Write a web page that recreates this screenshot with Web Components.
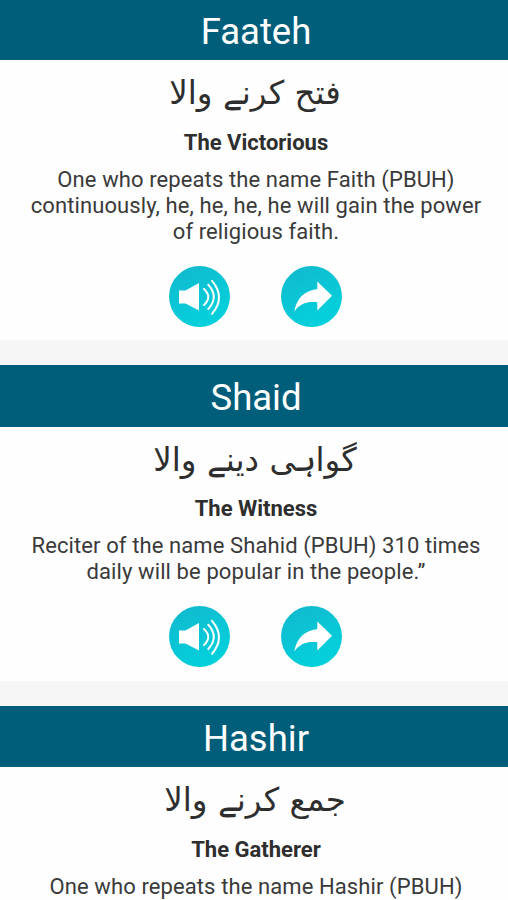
<!DOCTYPE html>
<html lang="en">
<head>
<meta charset="utf-8">
<title>Names</title>
<style>
  body {
    margin: 0;
    height: 900px;
    overflow: hidden;
    background: #f6f6f6;
    font-family: Roboto, "Liberation Sans", sans-serif;
    color: #2e2e2e;
  }
</style>
</head>
<body>
<name-list>
  <name-card name="Faateh" urdu="فتح کرنے والا" meaning="The Victorious">One who repeats the name Faith (PBUH)<br>continuously, he, he, he, he will gain the power<br>of religious faith.</name-card>
  <name-card name="Shaid" urdu="گواہی دینے والا" meaning="The Witness">Reciter of the name Shahid (PBUH) 310 times<br>daily will be popular in the people.”</name-card>
  <name-card name="Hashir" urdu="جمع کرنے والا" meaning="The Gatherer" compact>One who repeats the name Hashir (PBUH)</name-card>
</name-list>

<script>
const icons = {
  sound: `
    <path fill="#fff" d="M10 24.500h6.500L30 17v27.500l-13.500-7H10z"/>
    <g fill="none" stroke="#fff" stroke-width="2" stroke-linecap="round">
      <path d="M35 23q8.500 8 0 16"/>
      <path d="M39.300 18.800q11 12 0 24.200"/>
      <path d="M43 14.800q14 16.400 0 33"/>
    </g>`,
  share: `
    <path fill="#fff" d="M36.300 15.500 51 29.800 36.300 44.500v-8.300c-10-1-17 1-23 9.200C15.500 33 23 24.500 36.300 23z"/>`
};

class NameList extends HTMLElement {
  constructor() {
    super();
    const shadow = this.attachShadow({ mode: 'open' });
    shadow.innerHTML = /*html*/ `
      <style>
        :host {
          display: flex;
          flex-direction: column;
          gap: 25px;
          margin-top: -1.5px;
        }
      </style>
      <slot></slot>
    `;
  }
}

class RoundButton extends HTMLElement {
  constructor() {
    super();
    const shadow = this.attachShadow({ mode: 'open' });
    shadow.innerHTML = /*html*/ `
      <style>
        :host {
          display: block;
          width: 61px;
          height: 61px;
        }
        svg {
          display: block;
        }
      </style>
      <svg width="61" height="61" viewBox="0 0 61 61">
        <defs>
          <linearGradient id="fill" x1="0" y1="0" x2=".5" y2="1">
            <stop offset="0" stop-color="#12b8cc"/>
            <stop offset="1" stop-color="#04d0dc"/>
          </linearGradient>
        </defs>
        <circle cx="30.5" cy="30.5" r="30.5" fill="url(#fill)"/>
        ${icons[this.getAttribute('icon')]}
      </svg>
    `;
  }
}

class NameCard extends HTMLElement {
  constructor() {
    super();
    const shadow = this.attachShadow({ mode: 'open' });
    const name = this.getAttribute('name');
    const urdu = this.getAttribute('urdu');
    const meaning = this.getAttribute('meaning');
    // compact cards have no buttons
    const actions = this.hasAttribute('compact') ? '' : `
      <div class="actions">
        <round-button icon="sound"></round-button>
        <round-button icon="share"></round-button>
      </div>`;

    shadow.innerHTML = /*html*/ `
      <style>
        :host {
          display: block;
          flex: none;
          background: #fefefe;
          text-align: center;
        }
        h2, h3, p {
          margin: 0;
          padding-left: 4px;
        }
        h2 {
          height: 61.5px;
          box-sizing: border-box;
          padding-top: 2px;
          background: #005e7a;
          color: #fff;
          font-size: 36.5px;
          font-weight: 400;
          line-height: 61px;
        }
        .urdu {
          height: 63.5px;
          padding-left: 2px;
          font-family: "DejaVu Sans", sans-serif;
          font-size: 32.5px;
          line-height: 66px;
        }
        h3 {
          font-size: 22px;
          font-weight: 700;
          line-height: 38px;
        }
        .text {
          padding-top: 5px;
          color: #3a3a3a;
          font-size: 22px;
          line-height: 26px;
          letter-spacing: .1px;
          white-space: nowrap;
        }
        .actions {
          display: flex;
          justify-content: center;
          gap: 51px;
          padding: 21px 0 13.5px 3px;
        }
      </style>
      <h2>${name}</h2>
      <p class="urdu" lang="ur" dir="rtl">${urdu}</p>
      <h3>${meaning}</h3>
      <p class="text"><slot></slot></p>
      ${actions}
    `;
  }
}

customElements.define('name-list', NameList);
customElements.define('round-button', RoundButton);
customElements.define('name-card', NameCard);
</script>
</body>
</html>
